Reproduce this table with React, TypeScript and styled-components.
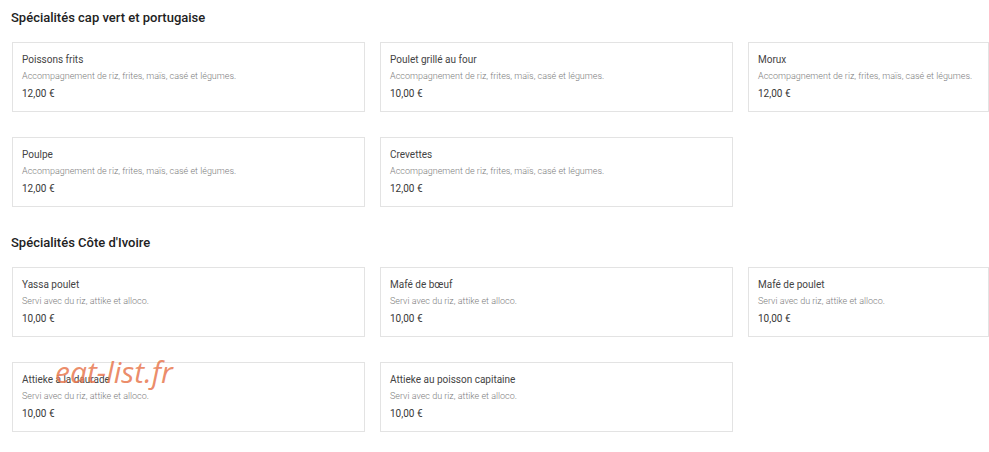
import React from "react";
import styled, { createGlobalStyle } from "styled-components";

const GlobalStyle = createGlobalStyle`
  html, body { margin: 0; padding: 0; background: #ffffff; }
  body { font-family: Roboto, "Liberation Sans", sans-serif; color: #333; overflow: hidden; }
`;

const Page = styled.div`
  position: relative;
  width: 989px;
  height: 452px;
  padding: 8px 0 0 12px;
  box-sizing: border-box;
  overflow: hidden;
`;

const Section = styled.section<{ $first?: boolean }>`
  margin-top: ${(p) => (p.$first ? "0" : "26px")};
`;

const Heading = styled.h2`
  margin: 0 0 14px -1px;
  font-size: 13px;
  line-height: 20px;
  font-weight: 500;
  color: #222;
`;

const Grid = styled.div`
  display: grid;
  grid-template-columns: 353px 353px 241px;
  column-gap: 15px;
  row-gap: 25px;
`;

const Card = styled.div`
  border: 1px solid #e3e3e3;
  padding: 10px 9px 10px 9px;
  height: 70px;
  box-sizing: border-box;
  display: flex;
  flex-direction: column;
`;

const Title = styled.div`
  font-size: 10px;
  line-height: 14px;
  color: #444;
`;

const Desc = styled.div`
  margin-top: 3px;
  font-size: 9px;
  line-height: 12px;
  font-weight: 300;
  color: #7d7d7d;
  white-space: nowrap;
`;

const Price = styled.div`
  margin-top: 5px;
  font-size: 10px;
  line-height: 14px;
  color: #383838;
`;

const Watermark = styled.div`
  position: absolute;
  left: 55px;
  top: 352px;
  font-family: "Open Sans", sans-serif;
  font-style: italic;
  font-size: 30px;
  line-height: 40px;
  color: rgba(232, 120, 80, 0.85);
  pointer-events: none;
`;

type Item = { name: string; desc: string; price: string };

const capVert: Item[] = [
  { name: "Poissons frits", desc: "Accompagnement de riz, frites, maïs, casé et légumes.", price: "12,00 €" },
  { name: "Poulet grillé au four", desc: "Accompagnement de riz, frites, maïs, casé et légumes.", price: "10,00 €" },
  { name: "Morux", desc: "Accompagnement de riz, frites, maïs, casé et légumes.", price: "12,00 €" },
  { name: "Poulpe", desc: "Accompagnement de riz, frites, maïs, casé et légumes.", price: "12,00 €" },
  { name: "Crevettes", desc: "Accompagnement de riz, frites, maïs, casé et légumes.", price: "12,00 €" },
];

const ivoire: Item[] = [
  { name: "Yassa poulet", desc: "Servi avec du riz, attike et alloco.", price: "10,00 €" },
  { name: "Mafé de bœuf", desc: "Servi avec du riz, attike et alloco.", price: "10,00 €" },
  { name: "Mafé de poulet", desc: "Servi avec du riz, attike et alloco.", price: "10,00 €" },
  { name: "Attieke à la daurade", desc: "Servi avec du riz, attike et alloco.", price: "10,00 €" },
  { name: "Attieke au poisson capitaine", desc: "Servi avec du riz, attike et alloco.", price: "10,00 €" },
];

const Menu = ({ title, items, first }: { title: string; items: Item[]; first?: boolean }) => (
  <Section $first={first}>
    <Heading>{title}</Heading>
    <Grid>
      {items.map((it) => (
        <Card key={it.name}>
          <Title>{it.name}</Title>
          <Desc>{it.desc}</Desc>
          <Price>{it.price}</Price>
        </Card>
      ))}
    </Grid>
  </Section>
);

export default function App() {
  return (
    <>
      <GlobalStyle />
      <Page>
        <Menu title="Spécialités cap vert et portugaise" items={capVert} first />
        <Menu title="Spécialités Côte d'Ivoire" items={ivoire} />
        <Watermark>eat-list.fr</Watermark>
      </Page>
    </>
  );
}
